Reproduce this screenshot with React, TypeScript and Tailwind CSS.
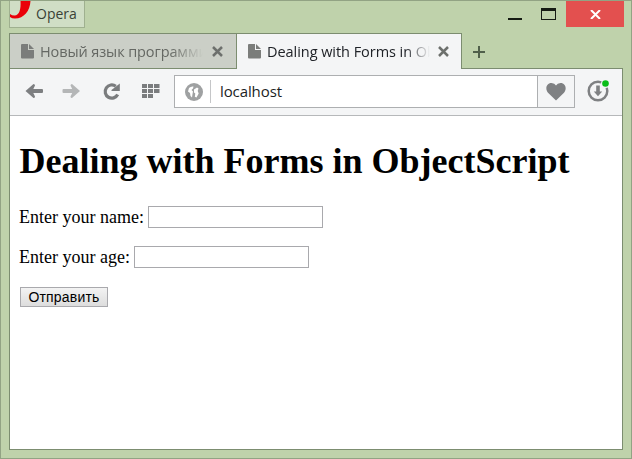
import React from "react";

function PageIcon() {
  return (
    <svg className="block h-[15px] w-[13px] shrink-0" viewBox="0 0 13 15" fill="#7b7d7b">
      <path d="M1 0h6v6h6v7.500q0 1-1 1H1q-1 0-1-1V1q0-1 1-1z" />
      <path d="M8 0l5 5H8z" />
    </svg>
  );
}

function CloseIcon() {
  return (
    <svg className="block h-[11px] w-[11px] shrink-0" viewBox="0 0 11 11" stroke="#6d706d" strokeWidth="2.5">
      <path d="M1 1l9 9M10 1l-9 9" />
    </svg>
  );
}

function TitleBar() {
  return (
    <div className="flex h-8 items-start justify-between pl-[8px] pr-[7px]">
      <div className="flex h-[27px] w-[76px] border border-t-0 border-[#9fb08f] bg-[#d0dec5]">
        <svg className="block h-[19px] w-[21px] shrink-0" viewBox="0 0 21 19">
          <path d="M10.500 0h10C20 10 14 17.500 5 17.500Q2 17.500 0 16V13Q2 14.500 4.500 14.500C9.500 14.500 11 8 10.500 0z" fill="#ea0008" />
        </svg>
        <span className="ml-[5px] pt-[3px] text-[14px] leading-[20px] text-[#3a4236]">Opera</span>
      </div>
      <div className="flex h-[26px]">
        <svg className="block h-[26px] w-[58px]" viewBox="0 0 58 26" fill="#161c14">
          <path d="M0 17h14v2H0z" />
          <path fillRule="evenodd" d="M33 7h15v12H33zM34 10v8h13v-8z" />
        </svg>
        <button className="flex h-[26px] w-[58px] items-center justify-center bg-[#e3504f]">
          <svg className="block h-[9px] w-[11px]" viewBox="0 0 11 9" stroke="#fff" strokeWidth="2">
            <path d="M1 0l9 9M10 0L1 9" />
          </svg>
        </button>
      </div>
    </div>
  );
}

function Tabs() {
  return (
    <div className="flex h-[35px] pl-[8px]">
      <div className="flex h-[35px] w-[228px] border border-b-0 border-[#7c8d70] bg-[#cbcfc7] pl-[11px] pt-[10px]">
        <PageIcon />
        <div className="-mt-[2px] ml-[6px] h-[21px] w-[164px] overflow-hidden whitespace-nowrap text-[14.500px] leading-[20px] tracking-[-0.1px] text-[#656863] [mask-image:linear-gradient(to_right,black_130px,transparent_163px)]">
          Новый язык программи
        </div>
        <div className="ml-[8px] mt-[2px]"><CloseIcon /></div>
      </div>
      <div className="relative z-10 flex h-[36px] w-[225px] border-r border-t border-[#7c8d70] bg-[#f4f5f6] pl-[11px] pt-[10px]">
        <PageIcon />
        <div className="-mt-[2px] ml-[6px] h-[21px] w-[163px] overflow-hidden whitespace-nowrap text-[14.500px] leading-[20px] tracking-[-0.05px] text-[#202328] [mask-image:linear-gradient(to_right,black_138px,transparent_163px)]">
          Dealing with Forms in Ob
        </div>
        <div className="ml-[8px] mt-[2px]"><CloseIcon /></div>
      </div>
      <svg className="ml-[11px] mt-[13px] block h-[12px] w-[12px]" viewBox="0 0 12 12" fill="#50604a">
        <path d="M5 0h2v5h5v2H7v5H5V7H0V5h5z" />
      </svg>
    </div>
  );
}

function Toolbar() {
  return (
    <div className="flex h-[47px] shrink-0 border-b border-[#b6b8ba] bg-[#f4f5f6] pt-[6px]">
      <svg className="block h-[33px] w-[164px] shrink-0" viewBox="10 75 164 33">
        <path d="M25.500 91l8-7q1.500 0 1.500 1.500L33.300 89H42q1 0 1 1v2q0 1-1 1h-8.700L35 96.500q0 1.500-1.500 1.500z" fill="#7d7f81" />
        <path d="M80 91l-8-7q-1.500 0-1.500 1.500L72.200 89H63.500q-1 0-1 1v2q0 1 1 1h8.700L70.500 96.500q0 1.500 1.500 1.500z" fill="#b4b6b7" />
        <path d="M117.700 94.500A6.600 6.600 0 1 1 115.800 86.300" fill="none" stroke="#7a7c7e" strokeWidth="3.200" />
        <path d="M119.800 83.500v7.500h-8.300v-1z" fill="#7a7c7e" />
        <path d="M142 84h5v4h-5zM148 84h5v4h-5zM154 84h5.500v4H154zM142 89h5v4h-5zM148 89h5v4h-5zM154 89h5.500v4H154zM142 94h5v4h-5zM148 94h5v4h-5z" fill="#7a7c7e" />
      </svg>
      <div className="flex h-[33px] w-[401px] shrink-0 items-center border border-[#adafb1] bg-white">
        <svg className="ml-[10px] block h-[18px] w-[18px] shrink-0" viewBox="0 0 18 18">
          <circle cx="9" cy="9" r="9" fill="#9fa1a2" />
          <path d="M4 5Q6 3 8.500 3.500L8 5.500 6.500 7 8 8.500 7.500 11 7 14.500 5.500 13 5 10 3 8.500z" fill="#fff" />
          <path d="M9 6.500l3-2 1.500 1-.8 2.500 1 2.500-2.200 4-1.700-.8.500-3.200L9 9.500z" fill="#fff" />
        </svg>
        <div className="ml-[7px] h-[23px] w-px bg-[#c5c6c8]" />
        <span className="ml-[9px] mb-[2px] flex-1 text-[15px] leading-[20px] tracking-[-0.1px] text-[#1b1e23]">localhost</span>
        <div className="flex h-full w-[37px] items-center justify-center border-l border-[#adafb1] bg-[#f4f5f6]">
          <svg className="block h-[18px] w-[20px]" viewBox="0 0 20 18" fill="#7f8183">
            <path d="M10 17.500L2 9.800C-1 6.500 0 0 5.500 0Q8.700 0 10 2.500Q11.300 0 14.500 0C20 0 21 6.500 18 9.800z" />
          </svg>
        </div>
      </div>
      <svg className="ml-[12px] block h-[24px] w-[24px] shrink-0 translate-y-[3px]" viewBox="587 78 24 24">
        <circle cx="598" cy="91" r="9.300" fill="none" stroke="#7f8183" strokeWidth="2.500" />
        <path d="M596.200 85.500h3.600v6h2.400l-4.200 4.800-4.200-4.800h2.400z" fill="#7f8183" />
        <circle cx="605.500" cy="83.500" r="4.500" fill="#f4f5f6" />
        <circle cx="605.500" cy="83.500" r="3.300" fill="#09bd18" />
      </svg>
    </div>
  );
}

function FormPage() {
  return (
    <div className="flex-1 pl-[9px] pt-[25px] font-['Liberation_Serif',serif] text-[18px] text-black">
      <h1 className="ml-[0.5px] h-[41px] whitespace-nowrap text-[36px] font-bold leading-[41px]">Dealing with Forms in ObjectScript</h1>
      <div className="mt-[24px] flex h-[22px] items-center">
        <label htmlFor="name" className="mb-[1px] leading-[20px]">Enter your name:</label>
        <input id="name" className="ml-[4px] h-[22px] w-[175px] border border-[#a9a9ad] bg-white" />
      </div>
      <div className="mt-[18px] flex h-[22px] items-center">
        <label htmlFor="age" className="mb-[1px] leading-[20px]">Enter your age:</label>
        <input id="age" className="ml-[4px] h-[22px] w-[175px] border border-[#a9a9ad] bg-white" />
      </div>
      <button className="ml-px mt-[19px] block h-[20px] w-[88px] whitespace-nowrap border border-[#a9a9ad] bg-gradient-to-b from-[#f3f3f3] to-[#dddddd] font-['Liberation_Sans',sans-serif] text-[14px] leading-[18px] tracking-[0.2px]">Отправить</button>
    </div>
  );
}

export default function App() {
  return (
    <div className="flex h-[459px] w-[632px] flex-col overflow-hidden border border-[#92a384] bg-[#bfd2ab] pb-[8px] font-['Open_Sans','Noto_Sans',sans-serif]">
      <TitleBar />
      <Tabs />
      <div className="mx-[8px] flex min-h-0 flex-1 flex-col border border-[#7c8d70] bg-white">
        <Toolbar />
        <FormPage />
      </div>
    </div>
  );
}
